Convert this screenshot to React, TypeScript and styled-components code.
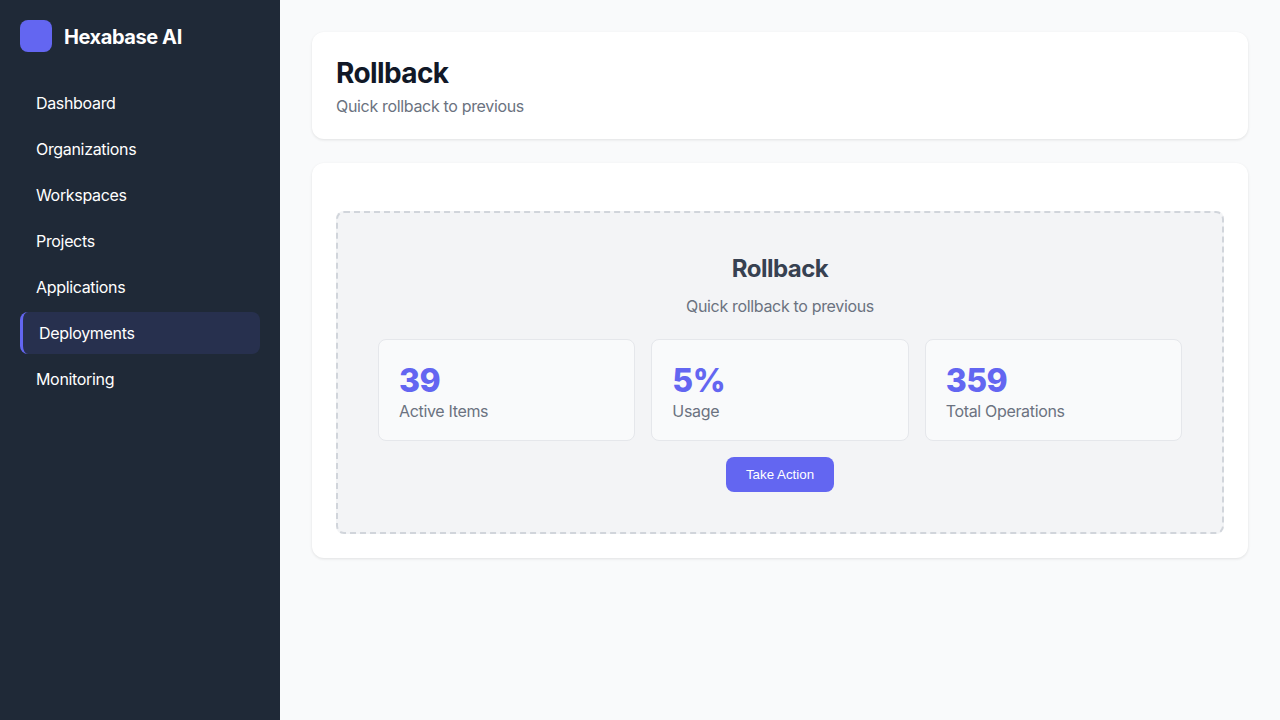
import React from "react";
import styled, { createGlobalStyle } from "styled-components";

const GlobalStyle = createGlobalStyle`
  * {
    box-sizing: border-box;
  }

  body {
    margin: 0;
    font-family: "Inter", sans-serif;
    background: #f9fafb;
  }
`;

const Layout = styled.div`
  display: flex;
  min-height: 720px;
`;

const Sidebar = styled.aside`
  flex: 0 0 280px;
  padding: 20px;
  background: #1f2937;
  color: #ffffff;
`;

const Brand = styled.div`
  display: flex;
  align-items: center;
  gap: 12px;
  margin-bottom: 30px;
`;

const BrandMark = styled.div`
  width: 32px;
  height: 32px;
  background: #6366f1;
  border-radius: 8px;
`;

const BrandName = styled.span`
  margin-top: 2px;
  font-size: 20px;
  font-weight: 700;
  line-height: 24px;
  letter-spacing: -0.42px;
`;

const Nav = styled.nav`
  display: flex;
  flex-direction: column;
  gap: 4px;
`;

const NavItem = styled.a<{ $active?: boolean }>`
  display: block;
  height: 42px;
  padding: 12px 16px;
  font-size: 16px;
  line-height: 19px;
  letter-spacing: -0.33px;
  font-weight: 400;
  color: #ffffff;
  border-radius: 8px;
  background: ${(p) => (p.$active ? "rgba(99, 102, 241, 0.125)" : "transparent")};
  border-left: ${(p) => (p.$active ? "3px solid #6366f1" : "none")};
`;

const Main = styled.main`
  flex: 1;
  display: flex;
  flex-direction: column;
  gap: 24px;
  padding: 32px;
`;

const Card = styled.section`
  padding: 24px;
  background: #ffffff;
  border-radius: 12px;
  box-shadow: 0 1px 3px rgba(0, 0, 0, 0.1);
`;

const PageTitle = styled.h1`
  margin: 0 0 6px;
  font-size: 28px;
  line-height: 35px;
  letter-spacing: -0.6px;
  font-weight: 700;
  color: #111827;
`;

const PageSubtitle = styled.p`
  margin: 0;
  font-size: 16px;
  line-height: 18px;
  letter-spacing: -0.33px;
  color: #6b7280;
`;

const Placeholder = styled.div`
  margin-top: 24px;
  padding: 40px;
  text-align: center;
  background: #f3f4f6;
  border: 2px dashed #d1d5db;
  border-radius: 8px;
`;

const PlaceholderTitle = styled.h2`
  margin: 0 0 13px;
  font-size: 24px;
  line-height: 31px;
  letter-spacing: -0.5px;
  font-weight: 700;
  color: #374151;
`;

const PlaceholderText = styled.p`
  margin: 0 0 23px;
  font-size: 16px;
  line-height: 19px;
  letter-spacing: -0.33px;
  color: #6b7280;
`;

const StatGrid = styled.div`
  display: grid;
  grid-template-columns: repeat(3, 1fr);
  gap: 16px;
  margin-bottom: 16px;
`;

const StatCard = styled.div`
  height: 102px;
  padding: 20px;
  text-align: left;
  background: #f9fafb;
  border: 1px solid #e5e7eb;
  border-radius: 8px;
`;

const StatValue = styled.div`
  margin-bottom: 1px;
  font-size: 32px;
  line-height: 41px;
  letter-spacing: -0.5px;
  font-weight: 800;
  color: #6366f1;
`;

const StatLabel = styled.div`
  font-size: 16px;
  line-height: 19px;
  letter-spacing: -0.33px;
  color: #6b7280;
`;

const ActionButton = styled.button`
  width: 108px;
  height: 35px;
  padding: 0;
  font-family: "Liberation Sans", Arial, sans-serif;
  font-size: 13.33px;
  color: #ffffff;
  background: #6366f1;
  border: none;
  border-radius: 8px;
`;

const navItems = [
  "Dashboard",
  "Organizations",
  "Workspaces",
  "Projects",
  "Applications",
  "Deployments",
  "Monitoring",
];

const stats = [
  { value: "39", label: "Active Items" },
  { value: "5%", label: "Usage" },
  { value: "359", label: "Total Operations" },
];

const App: React.FC = () => {
  return (
    <Layout>
      <GlobalStyle />
      <Sidebar>
        <Brand>
          <BrandMark />
          <BrandName>Hexabase AI</BrandName>
        </Brand>
        <Nav>
          {navItems.map((item) => (
            <NavItem key={item} $active={item === "Deployments"}>
              {item}
            </NavItem>
          ))}
        </Nav>
      </Sidebar>
      <Main>
        <Card>
          <PageTitle>Rollback</PageTitle>
          <PageSubtitle>Quick rollback to previous</PageSubtitle>
        </Card>
        <Card>
          <Placeholder>
            <PlaceholderTitle>Rollback</PlaceholderTitle>
            <PlaceholderText>Quick rollback to previous</PlaceholderText>
            <StatGrid>
              {stats.map((stat) => (
                <StatCard key={stat.label}>
                  <StatValue>{stat.value}</StatValue>
                  <StatLabel>{stat.label}</StatLabel>
                </StatCard>
              ))}
            </StatGrid>
            <ActionButton>Take Action</ActionButton>
          </Placeholder>
        </Card>
      </Main>
    </Layout>
  );
};

export default App;
